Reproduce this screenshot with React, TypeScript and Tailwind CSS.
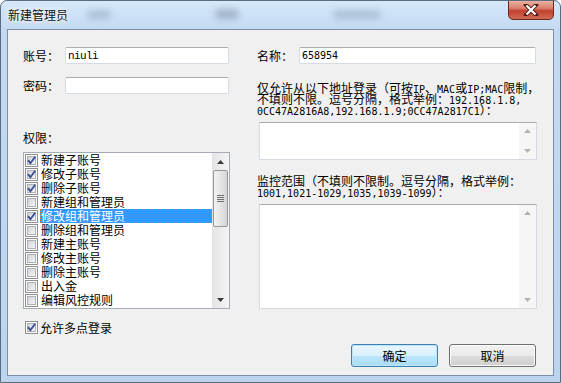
import React from "react";

const items = [
    { label: "新建子账号", checked: true },
    { label: "修改子账号", checked: true },
    { label: "删除子账号", checked: true },
    { label: "新建组和管理员", checked: false },
    { label: "修改组和管理员", checked: true, selected: true },
    { label: "删除组和管理员", checked: false },
    { label: "新建主账号", checked: false },
    { label: "修改主账号", checked: false },
    { label: "删除主账号", checked: false },
    { label: "出入金", checked: false },
    { label: "编辑风控规则", checked: false },
];

// half-width latin inside the Chinese hint text
function L({ children }: { children: React.ReactNode }) {
    return <span className="font-['DejaVu_Sans_Mono',monospace] text-[10px] leading-[11px]">{children}</span>;
}

function HintLine({ children }: { children: React.ReactNode }) {
    return <div className="h-[11px] leading-[11px] whitespace-nowrap">{children}</div>;
}

function CheckBox({ checked }: { checked: boolean }) {
    return (
        <svg width="13" height="13" viewBox="0 0 13 13" className="shrink-0">
            <defs>
                <linearGradient id="cb-fill" x1="0" y1="0" x2="1" y2="1">
                    <stop offset="0" stopColor="#cdd1d6" />
                    <stop offset="1" stopColor="#f7f7f7" />
                </linearGradient>
            </defs>
            <rect x="0.5" y="0.5" width="12" height="12" fill="#fcfcfc" stroke="#8e8f8f" />
            <rect x="2.5" y="2.5" width="8" height="8" fill="url(#cb-fill)" stroke="#aeb2b8" />
            {checked && <path d="M3 6.2 L5.4 9.2 L10.2 2.8" fill="none" stroke="#3c4f94" strokeWidth="1.9" />}
        </svg>
    );
}

function Arrow({ dir, color }: { dir: "up" | "down"; color: string }) {
    return (
        <svg width="7" height="4" viewBox="0 0 7 4">
            <path d={dir === "up" ? "M0 4 L3.5 0 L7 4 Z" : "M0 0 L7 0 L3.5 4 Z"} fill={color} />
        </svg>
    );
}

function DisabledScroll() {
    return (
        <div className="w-[17px] h-full flex flex-col justify-between bg-[#f6f6f6] py-[6px]">
            <div className="flex justify-center"><Arrow dir="up" color="#b4b4b4" /></div>
            <div className="flex justify-center"><Arrow dir="down" color="#b4b4b4" /></div>
        </div>
    );
}

function TextBox({ value, className }: { value?: string; className: string }) {
    return (
        <input
            readOnly
            value={value ?? ""}
            className={"h-[17px] bg-white border border-[#d5dbe3] border-t-[#abadb3] rounded-[2px] px-[2px] outline-none text-black " + className}
        />
    );
}

export default function App() {
    return (
        <div className="w-[561px] h-[383px] relative overflow-hidden rounded-t-[7px] border border-[#5b6c80] bg-[linear-gradient(180deg,#d6e8f9_0px,#c3daf2_28px,#bcd4ee_100%)] flex flex-col px-[6px] pb-[6px] font-['Noto_Sans_CJK_SC',sans-serif] text-[12px] text-black">
            {/* Title bar */}
            <div className="relative h-[28px] shrink-0 flex items-center pl-[1px] pb-[1px]">
                <span className="absolute left-[80px] top-[9px] w-[24px] h-[9px] rounded-full bg-[#7f93aa]/40 blur-[3px]" />
                <span className="absolute left-[208px] top-[8px] w-[24px] h-[10px] rounded-full bg-[#6f8199]/45 blur-[3px]" />
                <span className="absolute left-[326px] top-[9px] w-[48px] h-[9px] rounded-full bg-[#7f93aa]/40 blur-[3px]" />
                <span className="relative text-[12px] leading-none text-[#111] [text-shadow:0_0_6px_#ffffff,0_0_3px_#ffffff]">新建管理员</span>
            </div>
            <div className="absolute top-[-1px] right-[6px] w-[46px] h-[20px] rounded-b-[5px] border border-[#6b2b23] bg-[linear-gradient(180deg,#eab1a2_0%,#d9806c_40%,#c0412f_55%,#d26a52_100%)] flex items-center justify-center">
                <svg width="16" height="12" viewBox="0 0 16 12">
                    <path d="M3 1 L13 11 M13 1 L3 11" stroke="#4d1d18" strokeWidth="4" strokeLinecap="square" />
                    <path d="M3.5 1.5 L12.5 10.5 M12.5 1.5 L3.5 10.5" stroke="#ffffff" strokeWidth="2.2" />
                </svg>
            </div>

            {/* Client area */}
            <div className="flex-1 border border-[#7c8fa6] bg-[#f0f0f0] flex flex-col pl-[15px] pt-[17px]">
                <div className="flex items-start">
                    {/* Left column */}
                    <div className="w-[207px] flex flex-col">
                        <div className="h-[17px] flex items-center">
                            <span className="w-[42px] leading-[17px]">账号：</span>
                            <TextBox value="niuli" className="w-[164px] font-['Liberation_Mono',monospace] text-[11px] tracking-[-0.6px]" />
                        </div>
                        <div className="h-[17px] mt-[13px] flex items-center">
                            <span className="w-[42px] leading-[17px]">密码：</span>
                            <TextBox className="w-[164px]" />
                        </div>
                        <div className="h-[14px] mt-[37px] leading-[14px]">权限：</div>
                        <div className="h-[157px] mt-[7px] border border-[#a5acb5] bg-white flex">
                            <div className="flex-1 flex flex-col">
                                {items.map((item) => (
                                    <div key={item.label} className="h-[14px] shrink-0 flex items-center pl-[1px]">
                                        <CheckBox checked={item.checked} />
                                        <span
                                            className={
                                                item.selected
                                                    ? "ml-[2px] flex-1 h-[14px] leading-[12px] whitespace-nowrap border border-dotted border-[#d07a2c] bg-[#3399ff] text-white"
                                                    : "ml-[2px] flex-1 h-[14px] leading-[12px] whitespace-nowrap border border-transparent"
                                            }
                                        >
                                            {item.label}
                                        </span>
                                    </div>
                                ))}
                            </div>
                            <div className="w-[17px] h-full flex flex-col bg-[linear-gradient(90deg,#e4e4e4,#f4f4f4)]">
                                <div className="h-[17px] flex items-center justify-center"><Arrow dir="up" color="#3a3a3a" /></div>
                                <div className="h-[57px] mx-[1px] rounded-[2px] border border-[#979797] bg-[linear-gradient(90deg,#f4f4f4,#e6e6e6_45%,#d4d4d4)] flex flex-col items-center justify-center gap-[1px]">
                                    <span className="w-[7px] h-[1px] bg-[#707070]" />
                                    <span className="w-[7px] h-[1px] bg-[#707070]" />
                                    <span className="w-[7px] h-[1px] bg-[#707070]" />
                                    <span className="w-[7px] h-[1px] bg-[#707070]" />
                                </div>
                                <div className="flex-1" />
                                <div className="h-[17px] flex items-center justify-center"><Arrow dir="down" color="#3a3a3a" /></div>
                            </div>
                        </div>
                    </div>

                    {/* Right column */}
                    <div className="ml-[27px] w-[280px] flex flex-col">
                        <div className="h-[17px] flex items-center">
                            <span className="w-[42px] leading-[17px]">名称：</span>
                            <TextBox value="658954" className="w-[237px] font-['DejaVu_Sans_Mono',monospace] text-[10px]" />
                        </div>
                        <div className="mt-[18px] h-[33px] flex flex-col">
                            <HintLine>仅允许从以下地址登录（可按<L>IP</L>、<L>MAC</L>或<L>IP;MAC</L>限制，</HintLine>
                            <HintLine>不填则不限。逗号分隔，格式举例：<L>192.168.1.8,</L></HintLine>
                            <HintLine><L>0CC47A2816A8,192.168.1.9;0CC47A2817C1</L>）：</HintLine>
                        </div>
                        <div className="ml-[2px] mt-[7px] w-[278px] h-[38px] border border-[#d5dbe3] border-t-[#abadb3] bg-white flex">
                            <div className="flex-1" />
                            <DisabledScroll />
                        </div>
                        <div className="mt-[15px] h-[22px] flex flex-col">
                            <HintLine>监控范围（不填则不限制。逗号分隔，格式举例：</HintLine>
                            <HintLine><L>1001,1021-1029,1035,1039-1099</L>）：</HintLine>
                        </div>
                        <div className="ml-[2px] mt-[7px] w-[278px] h-[105px] border border-[#d5dbe3] border-t-[#abadb3] bg-white flex">
                            <div className="flex-1" />
                            <DisabledScroll />
                        </div>
                    </div>
                </div>

                <div className="mt-[12px] h-[13px] flex items-center ml-[2px]">
                    <CheckBox checked />
                    <span className="ml-[2px] leading-[13px]">允许多点登录</span>
                </div>

                <div className="mt-[10px] flex justify-end gap-[11px] pr-[17px]">
                    <button className="w-[87px] h-[23px] rounded-[3px] border border-[#3c7fb1] bg-[linear-gradient(180deg,#e9f6fd_0%,#d9f0fc_50%,#bee6fd_50%,#a9dcf6_100%)] shadow-[inset_0_0_0_1px_#bfe5f8] text-[12px] leading-none">
                        确定
                    </button>
                    <button className="w-[87px] h-[23px] rounded-[3px] border border-[#707070] bg-[linear-gradient(180deg,#f2f2f2_0%,#ebebeb_50%,#dddddd_50%,#cfcfcf_100%)] shadow-[inset_0_0_0_1px_#fcfcfc] text-[12px] leading-none">
                        取消
                    </button>
                </div>
            </div>
        </div>
    );
}
